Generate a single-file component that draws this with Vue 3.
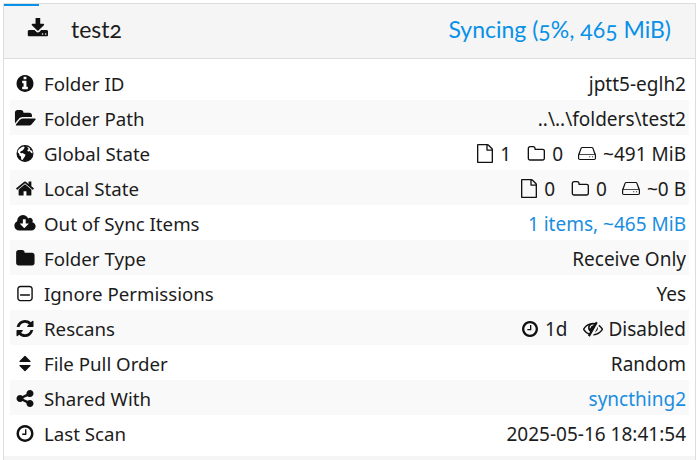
<script setup>
const icons = {
	info: { box: '128 128 1536 1536', d: 'M1152 1376v-160q0-14-9-23t-23-9h-96v-512q0-14-9-23t-23-9h-320q-14 0-23 9t-9 23v160q0 14 9 23t23 9h96v320h-96q-14 0-23 9t-9 23v160q0 14 9 23t23 9h448q14 0 23-9t9-23zm-128-896v-160q0-14-9-23t-23-9h-192q-14 0-23 9t-9 23v160q0 14 9 23t23 9h192q14 0 23-9t9-23zm640 416q0 209-103 385.500t-279.500 279.500-385.500 103-385.500-103-279.500-279.500-103-385.500 103-385.500 279.500-279.500 385.500-103 385.500 103 279.500 279.500 103 385.500z' },
	folderOpen: { box: '0 128 1943 1536', d: 'M1943 952q0 31-31 66l-336 396q-43 51-120.500 86.500t-143.500 35.500h-1088q-34 0-60.500-13t-26.500-43q0-31 31-66l336-396q43-51 120.500-86.500t143.500-35.500h1088q34 0 60.500 13t26.500 43zm-343-344v160h-832q-94 0-197 47.500t-164 119.500l-337 396-5 6q0-4-.5-12.500t-.5-12.500v-960q0-92 66-158t158-66h320q92 0 158 66t66 158v32h544q92 0 158 66t66 158z' },
	home: { box: '90 128 1612 1536', d: 'M1472 992v480q0 26-19 45t-45 19h-384v-384h-256v384h-384q-26 0-45-19t-19-45v-480q0-1 .5-3t.5-3l575-474 575 474q1 2 1 6zm223-69l-62 74q-8 9-21 11h-3q-13 0-21-7l-692-577-692 577q-12 8-24 7-13-2-21-11l-62-74q-8-10-7-23.500t11-21.500l719-599q32-26 76-26t76 26l244 204v-195q0-14 9-23t23-9h192q14 0 23 9t9 23v408l219 182q10 8 11 21.500t-7 23.500z' },
	cloud: { box: '0 128 1920 1536', d: 'M1280 928q0-14-9-23t-23-9h-224v-352q0-13-9.500-22.500t-22.500-9.500h-192q-13 0-22.500 9.500t-9.500 22.500v352h-224q-13 0-22.500 9.500t-9.500 22.500q0 14 9 23l352 352q9 9 23 9t23-9l351-351q10-12 10-24zm640 224q0 159-112.500 271.500t-271.500 112.500h-1088q-185 0-316.500-131.500t-131.500-316.500q0-130 70-240t188-165q-2-30-2-43 0-212 150-362t362-150q156 0 285.500 87t188.500 231q71-62 166-62 106 0 181 75t75 181q0 76-41 138 130 31 213.500 135.500t83.500 238.500z' },
	folder: { box: '0 128 1728 1536', d: 'M1728 608v704q0 92-66 158t-158 66h-1216q-92 0-158-66t-66-158v-960q0-92 66-158t158-66h320q92 0 158 66t66 158v32h672q92 0 158 66t66 158z' },
	minus: { box: '0 -128 1408 1536', d: 'M1152 736v64q0 14-9 23t-23 9h-832q-14 0-23-9t-9-23v-64q0-14 9-23t23-9h832q14 0 23 9t9 23zm128 320v-832q0-66-47-113t-113-47h-832q-66 0-113 47t-47 113v832q0 66 47 113t113 47h832q66 0 113-47t47-113zm128-832v832q0 119-84.500 203.500t-203.500 84.500h-832q-119 0-203.500-84.500t-84.500-203.500v-832q0-119 84.500-203.500t203.500-84.500h832q119 0 203.500 84.500t84.500 203.500z' },
	refresh: { box: '128 128 1536 1536', d: 'M1639 1056q0 5-1 7-64 268-268 434.500t-478 166.500q-146 0-282.500-55t-243.500-157l-129 129q-19 19-45 19t-45-19-19-45v-448q0-26 19-45t45-19h448q26 0 45 19t19 45-19 45l-137 137q71 66 161 102t187 36q134 0 250-65t186-179q11-17 53-117 8-23 30-23h192q13 0 22.500 9.500t9.500 22.500zm25-800v448q0 26-19 45t-45 19h-448q-26 0-45-19t-19-45 19-45l138-138q-148-137-349-137-134 0-250 65t-186 179q-11 17-53 117-8 23-30 23h-199q-13 0-22.500-9.500t-9.500-22.500v-7q65-268 270-434.500t480-166.500q146 0 284 55.500t245 156.500l130-129q19-19 45-19t45 19 19 45z' },
	sort: { box: '128 128 1536 1536', d: 'M1408 1088q0 26-19 45l-448 448q-19 19-45 19t-45-19l-448-448q-19-19-19-45t19-45 45-19h896q26 0 45 19t19 45zm0-384q0 26-19 45t-45 19h-896q-26 0-45-19t-19-45 19-45l448-448q19-19 45-19t45 19l448 448q19 19 19 45z' },
	share: { box: '128 128 1536 1536', d: 'M1344 1024q133 0 226.500 93.500t93.500 226.500-93.500 226.500-226.500 93.500-226.500-93.500-93.500-226.500q0-12 2-34l-360-180q-92 86-218 86-133 0-226.500-93.500t-93.500-226.500 93.500-226.500 226.500-93.500q126 0 218 86l360-180q-2-22-2-34 0-133 93.500-226.500t226.500-93.500 226.500 93.500 93.500 226.500-93.500 226.500-226.500 93.500q-126 0-218-86l-360 180q2 22 2 34t-2 34l360 180q92-86 218-86z' },
	clock: { box: '128 128 1536 1536', d: 'M1024 544v448q0 14-9 23t-23 9h-320q-14 0-23-9t-9-23v-64q0-14 9-23t23-9h224v-352q0-14 9-23t23-9h64q14 0 23 9t9 23zm416 352q0-148-73-273t-198-198-273-73-273 73-198 198-73 273 73 273 198 198 273 73 273-73 198-198 73-273zm224 0q0 209-103 385.500t-279.500 279.500-385.500 103-385.500-103-279.500-279.500-103-385.500 103-385.500 279.500-279.500 385.500-103 385.500 103 279.500 279.500 103 385.500z' },
	download: { box: '0 128 1728 1536', d: 'M1344 1344q0-26-19-45t-45-19-45 19-19 45 19 45 45 19 45-19 19-45zm256 0q0-26-19-45t-45-19-45 19-19 45 19 45 45 19 45-19 19-45zm128-224v320q0 40-28 68t-68 28h-1472q-40 0-68-28t-28-68v-320q0-40 28-68t68-28h465l135 136q58 56 136 56t136-56l136-136h464q40 0 68 28t28 68zm-325-569q17 41-14 70l-448 448q-18 19-45 19t-45-19l-448-448q-31-29-14-70 17-39 59-39h256v-448q0-26 19-45t45-19h256q26 0 45 19t19 45v448h256q42 0 59 39z' },
	file: { box: '128 0 1536 1792', d: 'M1596 380q28 28 48 76t20 88v1152q0 40-28 68t-68 28h-1344q-40 0-68-28t-28-68v-1600q0-40 28-68t68-28h896q40 0 88 20t76 48zm-444-244v376h376q-10-29-22-41l-313-313q-12-12-41-22zm384 1528v-1024h-416q-40 0-68-28t-28-68v-416h-768v1536h1280z' },
	folderO: { box: '0 128 1728 1536', d: 'M1600 1312v-704q0-40-28-68t-68-28h-704q-40 0-68-28t-28-68v-64q0-40-28-68t-68-28h-320q-40 0-68 28t-28 68v960q0 40 28 68t68 28h1216q40 0 68-28t28-68zm128-704v704q0 92-66 158t-158 66h-1216q-92 0-158-66t-66-158v-960q0-92 66-158t158-66h320q92 0 158 66t66 158v32h672q92 0 158 66t66 158z' },
	hdd: { box: '0 256 1536 1280', d: 'M1536 1056v320q0 66-47 113t-113 47H160q-66 0-113-47T0 1376v-320q0-25 16-75l197-606q17-53 63-86t101-33h782q55 0 101 33t63 86l197 606q16 50 16 75zM1436 1060v340q0 40-40 40H140q-40 0-40-40v-340q0-30 40-30h1256q40 0 40 30zM150 950H1386L1230 400q-12-40-50-40H356q-38 0-50 40zM945 1216a55 55 0 1 0 110 0a55 55 0 1 0-110 0zM1185 1216a55 55 0 1 0 110 0a55 55 0 1 0-110 0z' },
	eyeSlash: { box: '0 128 1792 1536', d: 'M555 1335l78-141q-87-63-136-159t-49-203q0-121 61-225-229 117-381 353 167 258 427 375zm389-759q0-20-14-34t-34-14q-125 0-214.500 89.500t-89.500 214.500q0 20 14 34t34 14 34-14 14-34q0-86 61-147t147-61q20 0 34-14t14-34zm363-191q0 7-1 9-106 189-316 567t-315 566l-49 89q-10 16-28 16-12 0-134-70-16-10-16-28 0-12 44-87-143-65-263.500-173t-208.500-245q-20-31-20-69t20-69q153-235 380-371t496-136q89 0 180 17l54-97q10-16 28-16 5 0 18 6t31 15.500 33 18.500 31.500 18.500 19.500 11.500q16 10 16 27zm37 447q0 139-79 253.500t-209 164.500l280-502q8 45 8 84zm448 128q0 35-20 69-39 64-109 145-150 172-347.500 267t-419.500 95l74-132q212-18 392.500-137t301.500-307q-115-179-282-294l63-112q95 64 182.500 153t144.500 184q20 34 20 69z' },
	globe: { box: '128 128 1536 1536', d: 'M896 128a768 768 0 1 0 0 1536a768 768 0 1 0 0-1536zM560 330q120-70 250-76l60 90-70 70 40 70-110 60-70 110-150 40-60 130 110 60 130-30 130 90 120 40-40 160-130 180-90 150q-80-10-130-60l-20-240-130-100-30-160-140-130q30-280 330-424zM1040 270q200 40 340 190l-50 60 50 90 160 40q40 120 30 240l-130-60-120-170-100 60-110-60 30-130 90-10-60-130-130-120z' }
};

const rows = [
	{ icon: 'info', label: 'Folder ID', text: 'jptt5-eglh2' },
	{ icon: 'folderOpen', label: 'Folder Path', text: '..\\..\\folders\\test2' },
	{ icon: 'globe', label: 'Global State', parts: [['file', '1', 16], ['folderO', '0', 15], ['hdd', '~491 MiB', 0]] },
	{ icon: 'home', label: 'Local State', parts: [['file', '0', 16], ['folderO', '0', 15], ['hdd', '~0 B', 0]] },
	{ icon: 'cloud', label: 'Out of Sync Items', text: '1 items, ~465 MiB', blue: true },
	{ icon: 'folder', label: 'Folder Type', text: 'Receive Only' },
	{ icon: 'minus', label: 'Ignore Permissions', text: 'Yes' },
	{ icon: 'refresh', label: 'Rescans', parts: [['clock', '1d', 16], ['eyeSlash', 'Disabled', 0]] },
	{ icon: 'sort', label: 'File Pull Order', text: 'Random' },
	{ icon: 'share', label: 'Shared With', text: 'syncthing2', blue: true },
	{ icon: 'clock', label: 'Last Scan', text: '2025-05-16 18:41:54' }
];
const progress = 5;
</script>

<template>
	<div class="panel">
		<div class="progress" :style="{ width: progress + '%' }"></div>
		<div class="heading">
			<svg class="head-icon" :viewBox="icons.download.box"><path :d="icons.download.d" /></svg>
			<span class="name">test2</span>
			<span class="status">Syncing (5%, 465 MiB)</span>
		</div>
		<div class="body">
			<div v-for="row in rows" :key="row.label" class="row">
				<span class="row-icon"><svg :viewBox="icons[row.icon].box"><path :d="icons[row.icon].d" /></svg></span>
				<span class="label">{{ row.label }}</span>
				<span v-if="row.text" class="value" :class="{ blue: row.blue }">{{ row.text }}</span>
				<span v-else class="value parts">
					<span v-for="part in row.parts" :key="part[0]" class="part" :style="{ marginRight: part[2] + 'px' }">
						<svg :class="'ic-' + part[0]" :viewBox="icons[part[0]].box" preserveAspectRatio="none"><path :d="icons[part[0]].d" /></svg>
						{{ part[1] }}
					</span>
				</span>
			</div>
		</div>
		<div class="footer"></div>
	</div>
</template>

<style>
html, body {
	background: #fff;
	overflow: hidden;
}
</style>

<style scoped>
.panel {
	position: relative;
	margin: 3px 1px 0 3px;
	height: 470px;
	border: 1px solid #ddd;
	box-sizing: border-box;
	color: #1c1c1c;
	font-family: "Noto Sans", "Open Sans", sans-serif;
	font-size: 19px;
}
.progress {
	position: absolute;
	left: 0;
	top: 0;
	height: 2px;
	background: #0891e8;
}
.heading {
	display: flex;
	align-items: center;
	height: 55px;
	box-sizing: border-box;
	padding: 0 24px 5px 23px;
	background: #f5f5f5;
	border-bottom: 1px solid #ddd;
	font-family: Lato, sans-serif;
	font-size: 23px;
	font-variant-numeric: oldstyle-nums;
}
.head-icon {
	width: 21px;
	height: 21px;
	fill: #111;
	margin-right: 23px;
}
.name {
	flex: 1;
}
.status {
	color: #0891e8;
}
.body {
	padding: 6px;
}
.row {
	display: flex;
	align-items: center;
	height: 35px;
	padding: 2px 3px 0 4px;
	box-sizing: border-box;
}
.row:nth-child(even) {
	background: #f9f9f9;
}
.row-icon {
	display: flex;
	justify-content: center;
	width: 22px;
	margin-right: 8px;
}
.row-icon svg {
	width: 22px;
	height: 17px;
	fill: #111;
}
.label {
	flex: 1;
	font-size: 18.7px;
}
.value {
	text-align: right;
}
.blue {
	color: #1a8ee0;
}
.parts {
	display: flex;
	align-items: center;
}
.part {
	display: flex;
	align-items: center;
	gap: 7px;
}
.part svg {
	fill: #111;
}
.ic-file {
	width: 16px;
	height: 19px;
}
.ic-folderO {
	width: 18px;
	height: 16px;
}
.ic-hdd {
	width: 18px;
	height: 13px;
	fill-rule: evenodd;
}
.ic-clock {
	width: 16px;
	height: 16px;
}
.ic-eyeSlash {
	width: 20px;
	height: 17px;
	margin-right: -2px;
}
.footer {
	height: 20px;
	background: #f5f5f5;
}
</style>
